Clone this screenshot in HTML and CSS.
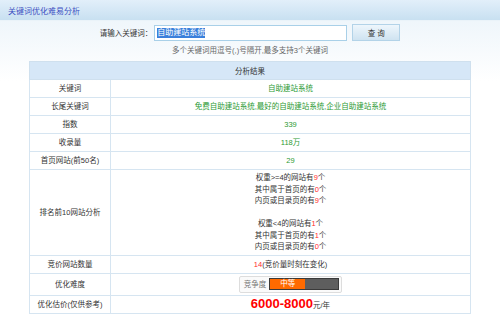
FILE: index.html
```
<!DOCTYPE html>
<html lang="zh-CN">
<head>
    <meta charset="UTF-8">
    <title>关键词优化难易分析</title>
    <link rel="stylesheet" href="styles.css">
</head>
<body>
    <div class="topbar"><span class="title">关键词优化难易分析</span></div>

    <div class="main">
        <div class="search">
            <label class="search-label">请输入关键词：</label>
            <div class="search-input"><span class="sel">自助建站系统</span></div>
            <button class="search-btn">查 询</button>
        </div>
        <p class="hint">多个关键词用逗号(,)号隔开,最多支持3个关键词</p>

        <table class="result">
            <tr><th colspan="2">分析结果</th></tr>
            <tr><td class="name">关键词</td><td class="val green">自助建站系统</td></tr>
            <tr><td class="name">长尾关键词</td><td class="val green">免费自助建站系统,最好的自助建站系统,企业自助建站系统</td></tr>
            <tr><td class="name">指数</td><td class="val green">339</td></tr>
            <tr><td class="name">收录量</td><td class="val green">118万</td></tr>
            <tr><td class="name">首页网站(前50名)</td><td class="val green">29</td></tr>
            <tr>
                <td class="name">排名前10网站分析</td>
                <td class="val rank">
                    权重&gt;=4的网站有<span class="red">9</span>个<br>
                    其中属于首页的有<span class="red">0</span>个<br>
                    内页或目录页的有<span class="red">9</span>个<br>
                    <br>
                    权重&lt;4的网站有<span class="red">1</span>个<br>
                    其中属于首页的有<span class="red">1</span>个<br>
                    内页或目录页的有<span class="red">0</span>个
                </td>
            </tr>
            <tr><td class="name">竞价网站数量</td><td class="val"><span class="red">14</span>(竞价量时刻在变化)</td></tr>
            <tr class="tall">
                <td class="name">优化难度</td>
                <td class="val">
                    <div class="meter">
                        <span class="meter-label">竞争度</span>
                        <div class="meter-bar"><span class="meter-fill">中等</span></div>
                    </div>
                </td>
            </tr>
            <tr><td class="name">优化估价(仅供参考)</td><td class="val"><span class="price">6000-8000</span>元/年</td></tr>
        </table>
    </div>
</body>
</html>
```

FILE: styles.css
```
body {
    margin: 0;
    font-family: "Liberation Sans", "Noto Sans CJK SC", sans-serif;
    font-size: 7.5px;
    color: #333;
    background: #fff;
}
.topbar {
    height: 20px;
    background: linear-gradient(#e2effa, #c8e0f1);
    border-bottom: 1px solid #eaf3f9;
    display: flex;
    align-items: center;
    padding-left: 8px;
}
.title {
    color: #3d4fc2;
    font-size: 8px;
}
.main {
    background: linear-gradient(#eff6fb, #fff 60px);
    padding-top: 3px;
}
.search {
    display: flex;
    justify-content: center;
    align-items: center;
    height: 17px;
}
.search-label {
    white-space: nowrap;
    text-align: right;
    color: #333;
}
.search-input {
    width: 189px;
    height: 14px;
    margin-left: 2px;
    padding-left: 2px;
    border: 1px solid #a9d0e8;
    background: #fff;
    display: flex;
    align-items: center;
}
.sel {
    background: #3a7fdb;
    color: #fff;
    font-size: 8px;
    line-height: 10px;
}
.search-btn {
    width: 48px;
    height: 17px;
    margin-left: 5px;
    padding: 0;
    border: 1px solid #b3d3e8;
    background: linear-gradient(#eef6fc, #cfe3f1);
    font-family: inherit;
    font-size: 7.5px;
    color: #333;
}
.hint {
    margin: 5px 0 0;
    line-height: 10px;
    text-align: center;
    color: #666;
}
.result {
    width: 442px;
    margin: 5px auto 0;
    border-collapse: collapse;
    border: 1px solid #cfe0ee;
}
.result th {
    height: 17px;
    padding: 0;
    background: #d6e7f7;
    font-weight: normal;
    color: #333;
    border: 1px solid #cfe0ee;
}
.result td {
    height: 17px;
    padding: 0;
    line-height: 11px;
    text-align: center;
    border: 1px solid #d6e5f1;
}
.name {
    width: 80px;
}
.green {
    color: #2c9a34;
}
.red {
    color: #ff2a2a;
}
.rank {
    line-height: 11.5px !important;
    padding: 2px 0 !important;
}
.tall td {
    height: 21px;
}
.meter {
    display: inline-flex;
    align-items: center;
    vertical-align: middle;
    height: 15px;
    padding: 0 2px 0 4px;
    border: 1px solid #ddd;
    border-radius: 2px;
    background: #fafafa;
}
.meter-label {
    color: #777;
    margin-right: 3px;
}
.meter-bar {
    width: 68px;
    height: 10px;
    border: 1px solid #3a3a3a;
    background: #5e5e5e;
    display: flex;
}
.meter-fill {
    width: 35px;
    background: #ff6a00;
    color: #fff;
    line-height: 10px;
    text-align: center;
}
.price {
    color: #f00;
    font-size: 13px;
    font-weight: bold;
}
```
